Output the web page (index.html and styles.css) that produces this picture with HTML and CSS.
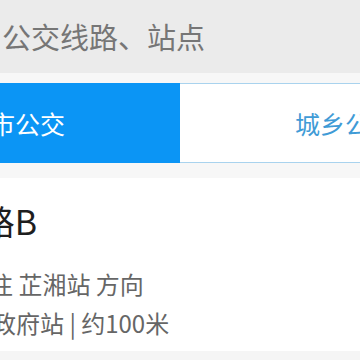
FILE: index.html
```html
<!DOCTYPE html>
<html lang="zh-CN">
<head>
<meta charset="utf-8">
<link rel="stylesheet" href="styles.css">
</head>
<body>
<div class="page">
  <div class="search">
    <span class="search-text">公交线路、站点</span>
  </div>
  <div class="tabs-wrap">
    <div class="tabs">
      <div class="tab tab-active">城市公交</div>
      <div class="tab">城乡公交</div>
    </div>
  </div>
  <div class="card">
    <div class="line-name">1路B</div>
    <div class="line-dir">开往 芷湘站 方向</div>
    <div class="line-stop">市政府站 | 约100米</div>
  </div>
  <div class="bottom"></div>
</div>
</body>
</html>
```
FILE: styles.css
```css
html, body {
  margin: 0;
  padding: 0;
  width: 360px;
  height: 360px;
  overflow: hidden;
  background: #f5f5f5;
  font-family: "Noto Sans CJK SC", "Noto Sans", sans-serif;
}

.page {
  width: 660px;
  margin-left: -150px;
}

.search {
  height: 73px;
  background: #ebebeb;
  display: flex;
  align-items: center;
  padding-left: 152px;
}

.search-text {
  font-size: 29px;
  color: #767676;
  line-height: 1;
}

.tabs-wrap {
  background: #f7f7f7;
  padding: 10px 0 15px;
}

.tabs {
  display: flex;
  height: 80px;
}

.tab {
  flex: 1;
  display: flex;
  align-items: center;
  justify-content: center;
  font-size: 25px;
  color: #3f9bd6;
  background: #fff;
  border-top: 1px solid #a9d3ee;
  border-bottom: 1px solid #a9d3ee;
  box-sizing: border-box;
}

.tab-active {
  background: #0b95f5;
  color: #fff;
  border-color: #0b95f5;
}

.card {
  background: #fff;
  padding: 21px 0 8px 112px;
  height: 173px;
  box-sizing: border-box;
}

.line-name {
  font-size: 34px;
  line-height: 44px;
  color: #1e1e1e;
  margin-bottom: 21px;
}

.line-dir, .line-stop {
  font-size: 24px;
  line-height: 39px;
  color: #666;
}

.line-dir {
  padding-left: 3px;
}

.line-stop {
  padding-left: 6px;
}

.bottom {
  height: 20px;
  background: #f5f5f5;
}
```
